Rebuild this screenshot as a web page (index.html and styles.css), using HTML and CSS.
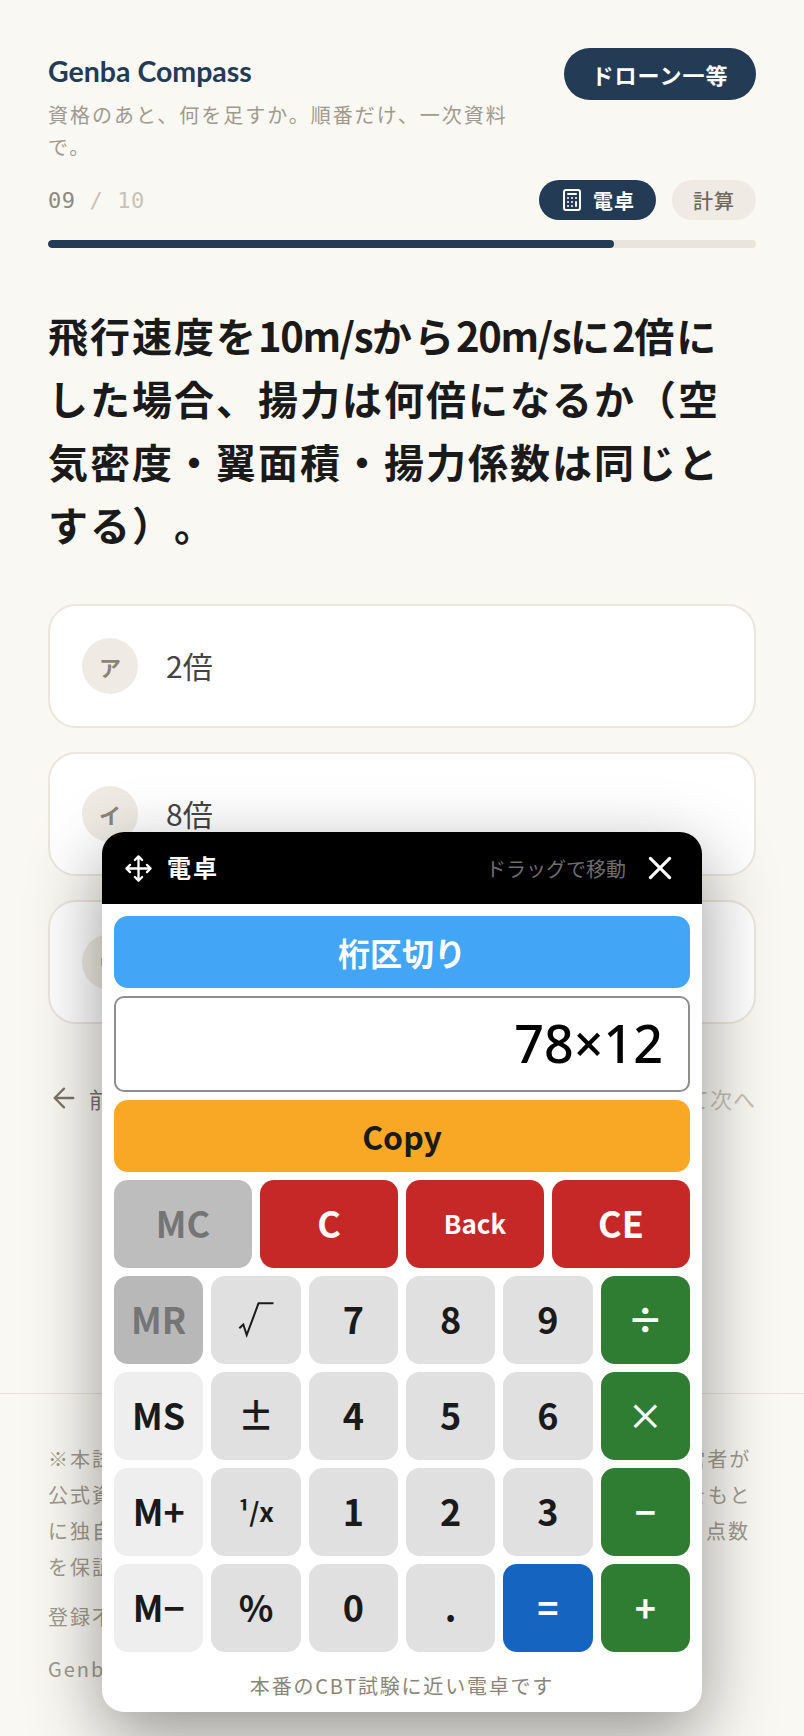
FILE: index.html
```html
<!DOCTYPE html>
<html lang="ja">
<head>
    <meta charset="UTF-8">
    <meta name="viewport" content="width=device-width, initial-scale=1.0">
    <title>Genba Compass</title>
    <link rel="stylesheet" href="styles.css">
</head>
<body>
    <header class="top">
        <div class="brand-row">
            <div class="brand">
                <div class="brand-name">Genba Compass</div>
                <p class="brand-sub">資格のあと、何を足すか。順番だけ、一次資料で。</p>
            </div>
            <div class="badge">ドローン一等</div>
        </div>
        <div class="meta-row">
            <div class="counter">09 <span class="counter-total">/ 10</span></div>
            <div class="pills">
                <button class="pill pill-dark">
                    <svg class="pill-icon" viewBox="0 0 24 24" fill="none" stroke="currentColor" stroke-width="2" stroke-linecap="round" stroke-linejoin="round"><rect x="4" y="2" width="16" height="20" rx="2"/><path d="M8 6h8M16 14v4M16 10h.01M12 10h.01M8 10h.01M12 14h.01M8 14h.01M12 18h.01M8 18h.01"/></svg>
                    電卓
                </button>
                <span class="pill pill-light">計算</span>
            </div>
        </div>
        <div class="progress"><div class="progress-fill" style="width: 80%"></div></div>
    </header>

    <main class="quiz">
        <h1 class="question">飛行速度を<span class="latin">10m/s</span>から<span class="latin">20m/s</span>に<span class="latin">2</span>倍にした場合、揚力は何倍になるか（空気密度・翼面積・揚力係数は同じとする）。</h1>

        <div class="options">
            <div class="option"><span class="option-mark">ア</span><span class="option-text">2倍</span></div>
            <div class="option"><span class="option-mark">イ</span><span class="option-text">8倍</span></div>
            <div class="option"><span class="option-mark">ウ</span><span class="option-text">4倍</span></div>
        </div>

        <nav class="quiz-nav">
            <a class="nav-prev">
                <svg class="nav-arrow" viewBox="0 0 24 24" fill="none" stroke="currentColor" stroke-width="1.7" stroke-linecap="round" stroke-linejoin="round"><path d="m12 19-7-7 7-7M19 12H5"/></svg>
                前の問題
            </a>
            <a class="nav-next">解答して次へ</a>
        </nav>
    </main>

    <footer class="foot">
        <p>※本試験とは関係のない非公式の学習用サイトで、当サイトの運営者が公式資料（法令・ガイドライン・告示など）を確認し、その内容をもとに独自に作成した模擬問題集です。実際の試験の出題内容や合否、点数を保証するものではありません。</p>
        <p>登録不要で、すべて無料で利用できます。</p>
        <p class="foot-brand">Genba Compass</p>
    </footer>

    <!-- 電卓パネル -->
    <section class="calc">
        <div class="calc-head">
            <svg class="calc-move" viewBox="0 0 24 24" fill="none" stroke="currentColor" stroke-width="1.9" stroke-linecap="round" stroke-linejoin="round"><path d="M12 2v20M15 19l-3 3-3-3M19 9l3 3-3 3M2 12h20M5 9l-3 3 3 3M9 5l3-3 3 3"/></svg>
            <span class="calc-title">電卓</span>
            <span class="calc-hint">ドラッグで移動</span>
            <svg class="calc-close" viewBox="0 0 20 20" fill="none" stroke="currentColor" stroke-width="2.6" stroke-linecap="round"><path d="M2 2l16 16M18 2L2 18"/></svg>
        </div>
        <div class="calc-body">
            <button class="wide key-sky">桁区切り</button>
            <div class="display">78×12</div>
            <button class="wide key-orange">Copy</button>

            <div class="row-4">
                <button class="key key-mem-off">MC</button>
                <button class="key key-red">C</button>
                <button class="key key-red key-small">Back</button>
                <button class="key key-red">CE</button>
            </div>
            <div class="row-6">
                <button class="key key-mem-on">MR</button>
                <button class="key key-num" aria-label="√">
                    <svg class="root-icon" viewBox="0 0 40 40" fill="none" stroke="#1a1a1a" stroke-width="2"><path d="M3.3 28.3 7.3 24.500 10.700 35 22.500 3.300H37.500"/></svg>
                </button>
                <button class="key key-num">7</button>
                <button class="key key-num">8</button>
                <button class="key key-num">9</button>
                <button class="key key-green">÷</button>

                <button class="key key-mem">MS</button>
                <button class="key key-num">±</button>
                <button class="key key-num">4</button>
                <button class="key key-num">5</button>
                <button class="key key-num">6</button>
                <button class="key key-green key-thin">×</button>

                <button class="key key-mem">M+</button>
                <button class="key key-num key-small">¹/x</button>
                <button class="key key-num">1</button>
                <button class="key key-num">2</button>
                <button class="key key-num">3</button>
                <button class="key key-green">−</button>

                <button class="key key-mem">M−</button>
                <button class="key key-num">%</button>
                <button class="key key-num">0</button>
                <button class="key key-num">.</button>
                <button class="key key-blue">=</button>
                <button class="key key-green">+</button>
            </div>
            <p class="calc-note">本番のCBT試験に近い電卓です</p>
        </div>
    </section>
</body>
</html>
```

FILE: styles.css
```css
* {
    box-sizing: border-box;
}
body {
    margin: 0;
    min-height: 1736px;
    position: relative;
    background-color: #faf8f3;
    color: #1a1a1a;
    font-family: "Noto Sans CJK JP", "Noto Sans", sans-serif;
    text-spacing-trim: space-all;
}
button {
    font-family: inherit;
    border: none;
}

/* header */
.top {
    padding: 48px 48px 0;
}
.brand-row {
    display: flex;
    justify-content: space-between;
    align-items: flex-start;
}
.brand {
    width: 474px;
    padding-top: 4px;
}
.brand-name {
    font-family: Lato, sans-serif;
    font-size: 28.5px;
    font-weight: 700;
    line-height: 38px;
    color: #243b55;
}
.brand-sub {
    margin: 9px 0 0;
    font-size: 20px;
    line-height: 32px;
    letter-spacing: 2px;
    color: #a09a8e;
}
.badge {
    width: 192px;
    height: 52px;
    border-radius: 26px;
    background-color: #243b55;
    color: #fff;
    font-size: 22px;
    font-weight: 700;
    line-height: 52px;
    letter-spacing: 1px;
    text-align: center;
}
.meta-row {
    display: flex;
    justify-content: space-between;
    align-items: center;
    margin-top: 17px;
}
.counter {
    font-family: "DejaVu Sans Mono", monospace;
    font-size: 22px;
    letter-spacing: 0.6px;
    color: #8f897d;
}
.counter-total {
    color: #c8c2b5;
}
.pills {
    display: flex;
    gap: 16px;
}
.pill {
    display: flex;
    align-items: center;
    height: 40px;
    padding: 0 21px;
    border-radius: 20px;
    font-size: 20px;
    letter-spacing: 1px;
}
.pill-dark {
    gap: 9px;
    background-color: #243b55;
    color: #fff;
    font-weight: 700;
}
.pill-icon {
    width: 24px;
    height: 24px;
}
.pill-light {
    background-color: #efebe4;
    color: #6f695e;
    font-weight: 500;
}
.progress {
    height: 8px;
    margin-top: 20px;
    border-radius: 4px;
    background-color: #e9e4dc;
    overflow: hidden;
}
.progress-fill {
    height: 100%;
    border-radius: 4px;
    background-color: #243b55;
}

/* question */
.quiz {
    padding: 0 48px;
}
.question {
    margin: 56px 0 48px;
    font-size: 40px;
    font-weight: 700;
    line-height: 63px;
    letter-spacing: 2px;
}
.latin {
    letter-spacing: -1.4px;
}
.options {
    display: flex;
    flex-direction: column;
    gap: 24px;
}
.option {
    display: flex;
    align-items: center;
    gap: 28px;
    height: 124px;
    padding: 0 32px;
    border: 2px solid #ebe6de;
    border-radius: 28px;
    background-color: #fff;
}
.option-mark {
    display: flex;
    align-items: center;
    justify-content: center;
    width: 56px;
    height: 56px;
    border-radius: 50%;
    background-color: #efebe4;
    color: #8a8478;
    font-size: 22px;
    font-weight: 700;
}
.option-text {
    padding-bottom: 2px;
    font-size: 30px;
    color: #444;
}
.quiz-nav {
    display: flex;
    justify-content: space-between;
    align-items: center;
    height: 56px;
    margin: 46px 0 267px;
    font-size: 22px;
    letter-spacing: 1px;
}
.nav-prev {
    display: flex;
    align-items: center;
    gap: 9px;
    color: #7a7468;
}
.nav-arrow {
    width: 32px;
    height: 32px;
}
.nav-next {
    color: #c5c0b5;
}

/* footer */
.foot {
    padding: 47px 48px 0;
    border-top: 1px solid #e9e2dc;
    font-size: 20px;
    line-height: 36px;
    letter-spacing: 2px;
    color: #a09a8e;
}
.foot p {
    margin: 0 0 14px;
}
.foot .foot-brand {
    margin-top: 16px;
}

/* calculator */
.calc {
    position: absolute;
    left: 102px;
    top: 832px;
    width: 600px;
    border-radius: 22px;
    background-color: #fff;
    box-shadow: 0 24px 72px rgba(0, 0, 0, 0.4);
    overflow: hidden;
}
.calc-head {
    display: flex;
    align-items: center;
    height: 72px;
    padding: 0 30px 0 22px;
    background-color: #000;
    color: #fff;
}
.calc-move {
    width: 29px;
    height: 29px;
}
.calc-title {
    margin: 0 0 3px 14px;
    font-size: 24px;
    font-weight: 700;
    letter-spacing: 2px;
}
.calc-hint {
    margin-left: auto;
    font-size: 20px;
    color: #6e6e6e;
}
.calc-close {
    width: 24px;
    height: 24px;
    margin-left: 22px;
}
.calc-body {
    padding: 12px 12px 0;
    display: flex;
    flex-direction: column;
    gap: 8px;
}
.wide {
    height: 72px;
    border-radius: 14px;
    font-size: 32px;
    font-weight: 700;
}
.key-sky {
    background-color: #42a5f5;
    color: #fff;
}
.key-orange {
    background-color: #f9a825;
    color: #1a1a1a;
}
.display {
    height: 96px;
    padding-right: 25px;
    border: 2px solid #8e8e8e;
    border-radius: 10px;
    color: #000;
    font-family: "Noto Sans", sans-serif;
    font-size: 52px;
    font-weight: 500;
    line-height: 90px;
    text-align: right;
}
.row-4, .row-6 {
    display: grid;
    gap: 8px;
    grid-auto-rows: 88px;
}
.row-4 {
    grid-template-columns: repeat(4, 1fr);
}
.row-6 {
    grid-template-columns: repeat(6, 1fr);
}
.key {
    display: flex;
    align-items: center;
    justify-content: center;
    padding: 0 0 4px;
    border-radius: 14px;
    font-size: 36px;
    font-weight: 700;
    color: #1a1a1a;
}
.key-small {
    font-size: 26px;
}
.key-thin {
    font-weight: 500;
}
.key-num {
    background-color: #e0e0e0;
}
.key-mem {
    background-color: #eee;
}
.key-mem-off {
    background-color: #bdbdbd;
    color: #757575;
}
.key-mem-on {
    background-color: #b8b8b8;
    color: #757575;
}
.key-red {
    background-color: #c62828;
    color: #fff;
}
.key-green {
    background-color: #2e7d32;
    color: #fff;
}
.key-blue {
    background-color: #1565c0;
    color: #fff;
}
.root-icon {
    width: 40px;
    height: 40px;
    margin-top: 4px;
}
.calc-note {
    margin: 0;
    height: 52px;
    font-size: 20px;
    line-height: 52px;
    letter-spacing: 1.8px;
    text-align: center;
    color: #8a8478;
}
```
